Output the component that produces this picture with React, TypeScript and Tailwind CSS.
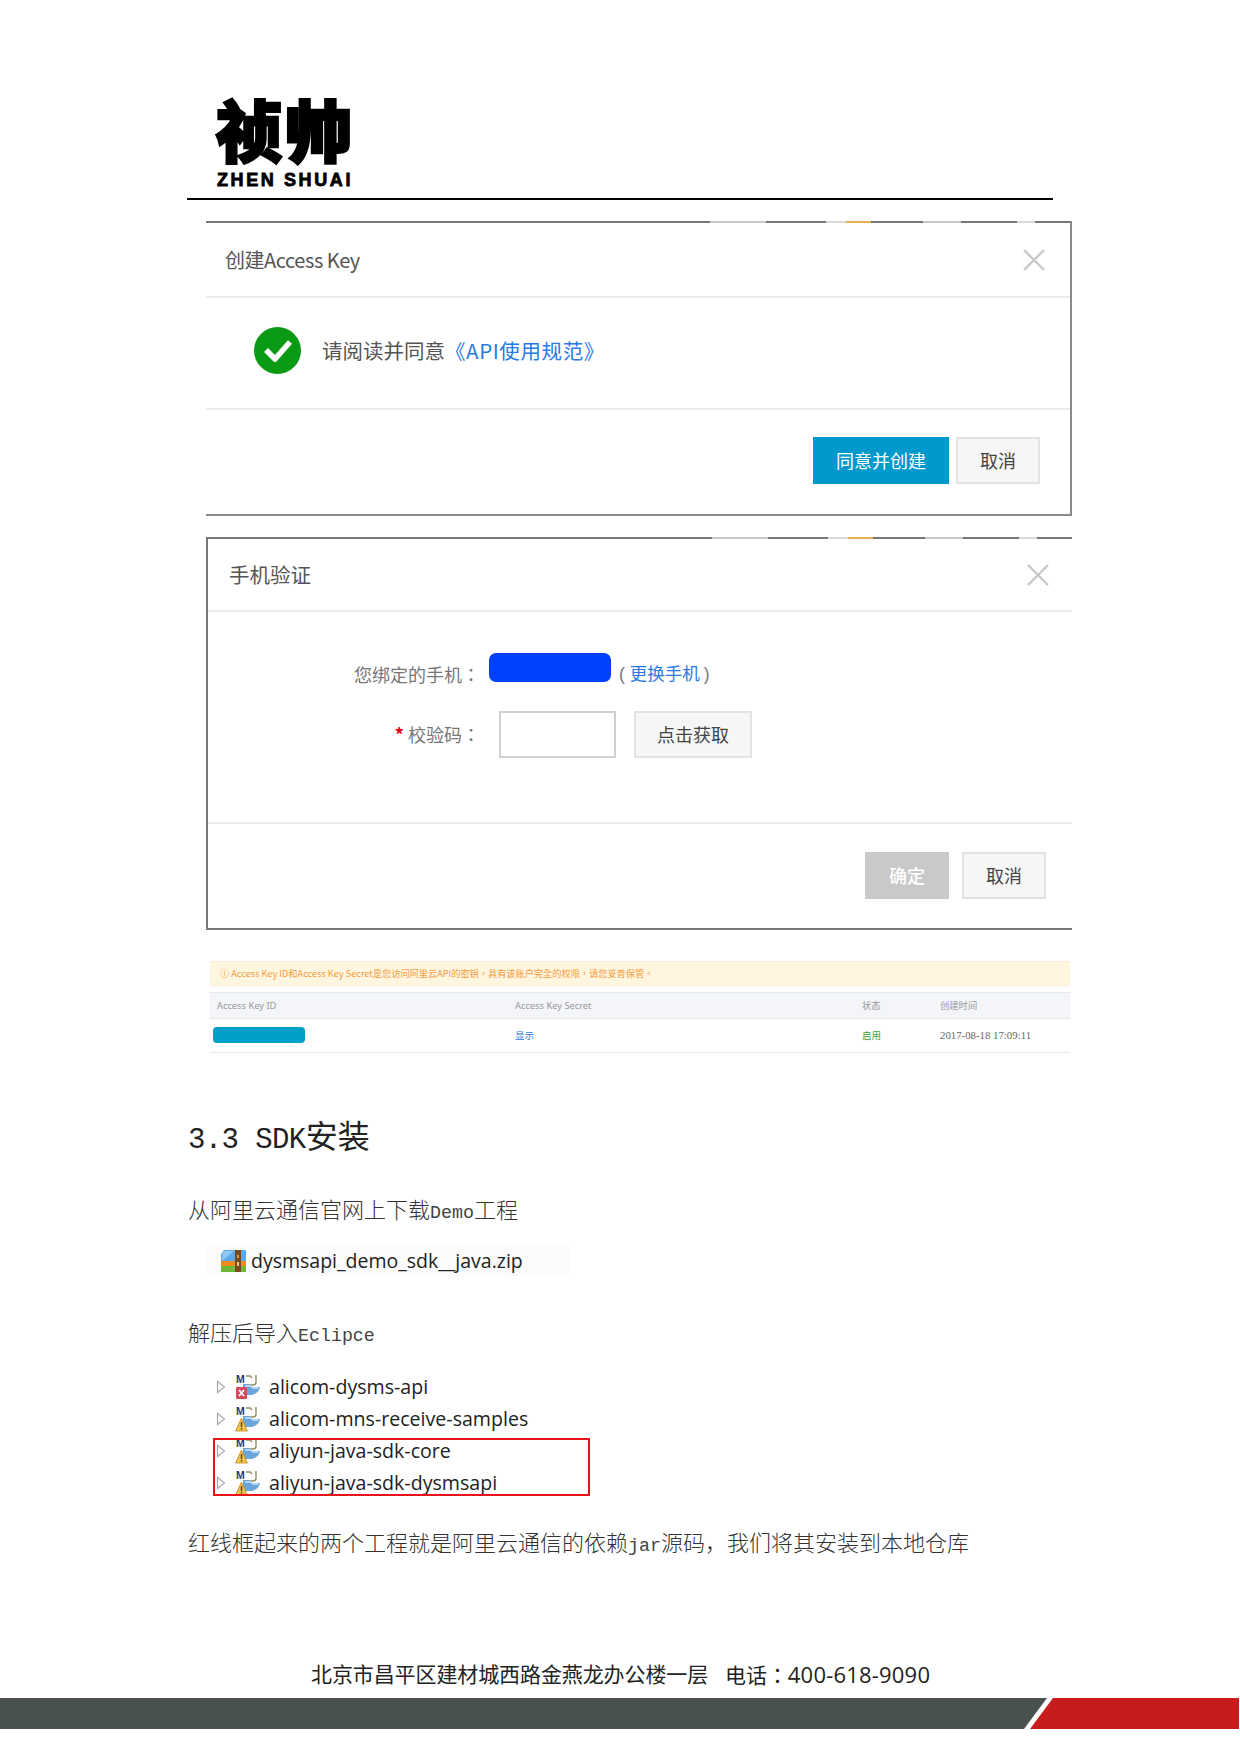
import React from 'react';

const cjk = '"Noto Sans CJK SC", sans-serif';

// 文档正文的拉丁字符是半角等宽的
const Mono: React.FC<{ children: React.ReactNode }> = ({ children }) => (
  <span className="font-['Liberation_Mono',monospace] text-[18.3px] text-[#444]">{children}</span>
);

// 截图里的冒号是居中的，TC 字形才是这样
const Colon = () => <span className="font-['Noto_Sans_CJK_TC',sans-serif]">：</span>;

const ZipIcon = () => (
  <svg width="27" height="24" viewBox="0 0 27 24" className="shrink-0">
    <path d="M1 5 L4 1 H25 Q26 1 26 2 V12 H1 Z" fill="#5aa9ea" />
    <path d="M4 2 H14 L3 11 H2 V5 Z" fill="#8cc8f4" />
    <rect x="1" y="12" width="25" height="5" fill="#f08a1d" />
    <rect x="1" y="17" width="25" height="6" fill="#6fb53a" />
    <rect x="15" y="1" width="6" height="22" fill="#7a4a1c" />
    <rect x="17" y="6" width="2" height="3" fill="#c89a5a" />
    <rect x="17" y="13" width="2" height="4" fill="#e8c98a" />
  </svg>
);

const ProjectIcon: React.FC<{ status: 'error' | 'warning' }> = ({ status }) => (
  <svg width="26" height="26" viewBox="0 0 26 26" className="shrink-0">
    <text x="1" y="9" fontSize="10.5" fontWeight="700" fontFamily="Liberation Sans" fill="#243a7a">M</text>
    <path d="M11 2 H15 L17 4 M21 1 V8 Q21 11 18 11 H14" fill="none" stroke="#8a8f5a" strokeWidth="1.4" />
    <path d="M8 10 H14 L17 13 H25 Q23 20 17 21 H8 Z" fill="#6aa6dc" />
    <path d="M10 12 H16 L18 14 H23" fill="none" stroke="#cfe4f7" strokeWidth="1.3" />
    {status === 'error' ? (
      <g>
        <rect x="1" y="13" width="11" height="12" rx="1" fill="#d9475a" />
        <path d="M4 16 L9 22 M9 16 L4 22" stroke="#fff" strokeWidth="1.8" />
      </g>
    ) : (
      <g>
        <path d="M6.5 12 L12.5 25 H0.5 Z" fill="#f0c24a" stroke="#b98a2a" strokeWidth="0.8" />
        <rect x="5.8" y="16" width="1.4" height="5" fill="#5a3d10" />
        <rect x="5.8" y="22" width="1.4" height="1.5" fill="#5a3d10" />
      </g>
    )}
  </svg>
);

const TreeRow: React.FC<{ name: string; status: 'error' | 'warning' }> = ({ name, status }) => (
  <div className="flex h-[32px] items-center">
    <svg width="10" height="14" viewBox="0 0 10 14" className="ml-[10px] shrink-0">
      <path d="M1.5 1.5 L8.5 7 L1.5 12.5 Z" fill="#fff" stroke="#a8a8a8" strokeWidth="1.2" />
    </svg>
    <div className="ml-[9px]">
      <ProjectIcon status={status} />
    </div>
    <span className="ml-[8px] font-['Open_Sans',sans-serif] text-[19.6px] leading-none text-[#222]">{name}</span>
  </div>
);

const CloseX = () => (
  <svg width="22" height="22" viewBox="0 0 22 22" className="shrink-0">
    <path d="M1 1 L21 21 M21 1 L1 21" stroke="#c8c8c8" strokeWidth="2.4" />
  </svg>
);

const GhostButton: React.FC<{ children: React.ReactNode; w: string }> = ({ children, w }) => (
  <div className={`flex h-[47px] items-center justify-center border-2 border-[#e3e3e3] bg-[#f6f6f6] text-[18px] text-[#444] ${w}`}>
    {children}
  </div>
);

const TopNoise = () => (
  <div className="flex h-[2px] w-full bg-[#777]">
    <div className="ml-[504px] h-full w-[56px] bg-[#c8c8c8]" />
    <div className="ml-[60px] h-full w-[20px] bg-[#d8d8d8]" />
    <div className="h-full w-[25px] bg-[#e8b050]" />
    <div className="ml-[52px] h-full w-[38px] bg-[#c8c8c8]" />
    <div className="ml-[56px] h-full w-[18px] bg-[#d8d8d8]" />
  </div>
);

const App: React.FC = () => {
  return (
    <div className="flex h-[1754px] w-[1240px] flex-col overflow-hidden bg-white" style={{ fontFamily: cjk }}>
      {/* 页眉 logo */}
      <div className="ml-[187px] w-[866px] border-b-2 border-black pt-[91px] pb-[6px]">
        <div className="ml-[28px] w-[140px] text-center leading-none text-black">
          <div className="h-[77px] text-[67px] font-black leading-[74px] tracking-[2px] [-webkit-text-stroke:2.5px_#000]">祯帅</div>
          <div className="whitespace-nowrap font-['Liberation_Sans',sans-serif] text-[18px] font-bold leading-[24px] tracking-[2.6px] [-webkit-text-stroke:0.8px_#000]">ZHEN SHUAI</div>
        </div>
      </div>

      {/* 创建 Access Key 弹窗 */}
      <div className="ml-[206px] mt-[21px] flex h-[295px] w-[866px] flex-col border-r-2 border-b-2 border-[#8a8a8a]">
        <TopNoise />
        <div className="flex h-[75px] items-center justify-between border-b-2 border-[#ececec] pr-[25px] pl-[19px]">
          <span className="text-[20px] tracking-[-0.45px] text-[#555]">创建Access Key</span>
          <CloseX />
        </div>
        <div className="flex h-[112px] items-center border-b-2 border-[#ececec] pb-[6px] pl-[48px]">
          <div className="flex h-[47px] w-[47px] items-center justify-center rounded-full bg-[#0a9a14]">
            <svg width="30" height="24" viewBox="0 0 30 24">
              <path d="M3 12 L12 21 L27 4" fill="none" stroke="#fff" strokeWidth="5.5" />
            </svg>
          </div>
          <span className="ml-[21px] text-[20.5px] text-[#555]">
            请阅读并同意<span className="tracking-[0.6px] text-[#2a7ae2]">《API使用规范》</span>
          </span>
        </div>
        <div className="flex flex-1 items-start justify-end gap-[7px] pt-[27px] pr-[30px]">
          <div className="flex h-[47px] w-[136px] items-center justify-center bg-[#0099cc] text-[18px] text-white">同意并创建</div>
          <GhostButton w="w-[84px]">取消</GhostButton>
        </div>
      </div>

      {/* 手机验证弹窗 */}
      <div className="ml-[206px] mt-[21px] flex h-[393px] w-[866px] flex-col border-b-2 border-l-2 border-[#777]">
        <TopNoise />
        <div className="flex h-[73px] items-center justify-between border-b-2 border-[#ececec] pr-[23px] pl-[21px]">
          <span className="text-[20.5px] text-[#555]">手机验证</span>
          <CloseX />
        </div>
        <div className="flex h-[212px] flex-col border-b-2 border-[#ececec]">
          <div className="mt-[47px] flex h-[30px] items-center">
            <span className="ml-[140px] w-[132px] text-right text-[18px] text-[#777]">
              您绑定的手机<Colon />
            </span>
            <div className="ml-[9px] h-[29px] w-[122px] -translate-y-[7px] rounded-[7px] bg-[#0040ff]" />
            <span className="ml-[8px] text-[17.5px] text-[#2a7ae2]">
              <span className="mr-[5px] font-['Liberation_Sans',sans-serif] text-[#777]">(</span>更换手机<span className="ml-[4px] font-['Liberation_Sans',sans-serif] text-[#777]">)</span>
            </span>
          </div>
          <div className="mt-[22px] flex h-[47px] items-center">
            <span className="ml-[174px] w-[98px] text-right text-[18px] text-[#777]">
              <span className="font-bold text-[#e60012]">* </span>校验码<Colon />
            </span>
            <div className="ml-[19px] h-[47px] w-[117px] border-2 border-[#d0d0d0] bg-white" />
            <div className="ml-[18px]">
              <GhostButton w="w-[118px]">点击获取</GhostButton>
            </div>
          </div>
        </div>
        <div className="flex flex-1 items-start justify-end gap-[13px] pt-[28px] pr-[26px]">
          <div className="flex h-[47px] w-[84px] items-center justify-center bg-[#c9c9c9] text-[18px] font-medium text-white">确定</div>
          <GhostButton w="w-[84px]">取消</GhostButton>
        </div>
      </div>

      {/* Access Key 表格 */}
      <div className="ml-[210px] mt-[31px] w-[860px]">
        <div className="flex h-[25px] items-center border-y border-[#fdf0d8] bg-[#fff6e0] pl-[10px] font-['Noto_Sans_CJK_TC',sans-serif] text-[9.2px] text-[#f59a3c]">
          ⓘ Access Key ID和Access Key Secret是您访问阿里云API的密钥，具有该账户完全的权限，请您妥善保管。
        </div>
        <div className="mt-[6px] flex h-[27px] items-center border-y border-[#e6e8ef] bg-[#f3f5f9] font-['Noto_Sans',sans-serif] text-[9.3px] text-[#999]">
          <span className="w-[305px] pl-[7px]">Access Key ID</span>
          <span className="w-[347px]">Access Key Secret</span>
          <span className="w-[78px]" style={{ fontFamily: cjk }}>状态</span>
          <span style={{ fontFamily: cjk }}>创建时间</span>
        </div>
        <div className="flex h-[34px] items-center border-b border-[#e8e8e8] text-[9.5px]">
          <div className="w-[305px] pl-[3px]">
            <div className="h-[16px] w-[92px] -translate-y-[1px] rounded-[4px] bg-[#00a0c8]" />
          </div>
          <span className="w-[347px] text-[#2a7ae2]">显示</span>
          <span className="w-[78px] text-[#3ca33c]">启用</span>
          <span className="font-['Liberation_Serif',serif] text-[10.8px] text-[#666]">2017-08-18 17:09:11</span>
        </div>
      </div>

      {/* 正文 */}
      <div className="ml-[188px] mt-[59px] flex flex-col text-[#333]">
        <h2 className="h-[44px] text-[32px] font-normal leading-[44px] text-[#222]">
          <span className="font-['Liberation_Mono',monospace] text-[29px] tracking-[-0.6px]">3.3 SDK</span>安装
        </h2>
        <p className="mt-[36px] h-[32px] text-[22px] font-light leading-[32px]">
          从阿里云通信官网上下载<Mono>Demo</Mono>工程
        </p>
        <div className="ml-[18px] mt-[21px] flex h-[31px] w-[364px] items-center bg-[#fbfbfb] pl-[14px]">
          <ZipIcon />
          <span className="ml-[4px] font-['Open_Sans',sans-serif] text-[19.5px] leading-none text-[#222]">dysmsapi_demo_sdk__java.zip</span>
        </div>
        <p className="mt-[39px] h-[32px] text-[22px] font-light leading-[32px]">
          解压后导入<Mono>Eclipce</Mono>
        </p>
        <div className="relative ml-[18px] mt-[24px] w-[400px]">
          <TreeRow name="alicom-dysms-api" status="error" />
          <TreeRow name="alicom-mns-receive-samples" status="warning" />
          <TreeRow name="aliyun-java-sdk-core" status="warning" />
          <TreeRow name="aliyun-java-sdk-dysmsapi" status="warning" />
          {/* 红线框 */}
          <div className="absolute top-[67px] left-[7px] h-[58px] w-[377px] border-2 border-[#e8141c]" />
        </div>
        <p className="mt-[26px] h-[32px] text-[22px] font-light leading-[32px]">
          红线框起来的两个工程就是阿里云通信的依赖<Mono>jar</Mono>源码，我们将其安装到本地仓库
        </p>
      </div>

      {/* 页脚 */}
      <div className="mt-auto flex flex-col">
        <div className="flex h-[34px] items-center pl-[311px] text-[21px] tracking-[-0.1px] text-[#222]">
          北京市昌平区建材城西路金燕龙办公楼一层
          <span className="ml-[17px]">
            电话<Colon />
            <span className="font-['Open_Sans',sans-serif] text-[22px] tracking-[0.2px]">400-618-9090</span>
          </span>
        </div>
        <div className="mt-[7px] mb-[25px] flex h-[31px]">
          <div className="h-full w-[1047px] bg-[#4a5250] [clip-path:polygon(0_0,100%_0,calc(100%-23px)_100%,0_100%)]" />
          <div className="-ml-[17px] h-full w-[209px] bg-[#c81b1d] [clip-path:polygon(23px_0,100%_0,100%_100%,0_100%)]" />
        </div>
      </div>
    </div>
  );
};

export default App;
